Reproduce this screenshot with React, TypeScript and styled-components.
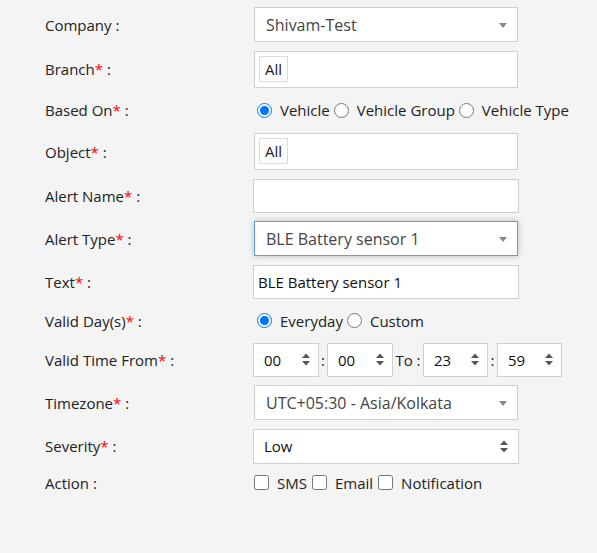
import React from 'react';
import styled, { createGlobalStyle } from 'styled-components';

const GlobalStyle = createGlobalStyle`
  html, body {
    margin: 0;
    padding: 0;
    background: #f4f4f4;
  }
  body {
    font-family: "Open Sans", "Noto Sans", Arial, sans-serif;
    color: #222;
  }
`;

const Form = styled.div`
  padding: 7px 0 40px 45px;
  display: flex;
  flex-direction: column;
  gap: 8.7px;
  min-height: 553px;
  box-sizing: border-box;
`;

const Row = styled.div<{ $h?: number }>`
  display: grid;
  grid-template-columns: 208px 1fr;
  align-items: center;
  height: ${(p) => (p.$h ? `${p.$h}px` : 'auto')};
`;

const Label = styled.div`
  font-size: 15px;
  color: #222;
  white-space: nowrap;
`;

const Req = styled.span`
  color: #f00;
`;

const SelectBox = styled.div<{ $focus?: boolean }>`
  box-sizing: border-box;
  width: 264px;
  height: 35px;
  margin-left: 1px;
  background: #fff;
  border: 1px solid ${(p) => (p.$focus ? '#5b9bf5' : '#cfcfcf')};
  box-shadow: ${(p) => (p.$focus ? '0 0 6px rgba(0,0,0,0.25)' : 'none')};
  display: flex;
  align-items: center;
  justify-content: space-between;
  padding: 0 10px 0 11px;
  font-size: 16px;
  color: #444;
`;

const Caret = styled.span`
  width: 0;
  height: 0;
  border-left: 4px solid transparent;
  border-right: 4px solid transparent;
  border-top: 5px solid #888;
  margin-top: 1px;
`;

const TagBox = styled.div`
  box-sizing: border-box;
  width: 264px;
  height: 37px;
  margin-left: 1px;
  background: #fff;
  border: 1px solid #cfcfcf;
  padding: 4px;
  display: flex;
  align-items: flex-start;
`;

const Tag = styled.span`
  box-sizing: border-box;
  height: 26px;
  padding: 0 5px;
  border: 1px solid #dcdcdc;
  background: #fff;
  font-size: 15px;
  color: #222;
  display: flex;
  align-items: center;
`;

const TextInput = styled.input`
  box-sizing: border-box;
  width: 266px;
  height: 34px;
  margin: 0;
  background: #fff;
  border: 1px solid #cfcfcf;
  outline: none;
  padding: 0 4px;
  font-family: inherit;
  font-size: 15px;
  color: #111;
`;

const Group = styled.div<{ $gap?: number }>`
  display: flex;
  align-items: center;
  gap: ${(p) => p.$gap ?? 0}px;
`;

const Option = styled.label`
  display: inline-flex;
  align-items: center;
  font-size: 15px;
  color: #222;
  gap: 8px;
`;

const Radio = styled.input.attrs({ type: 'radio' })`
  width: 15px;
  height: 15px;
  margin: 0 0 0 4px;
  accent-color: #0075ff;
`;

const Check = styled.input.attrs({ type: 'checkbox' })`
  width: 15px;
  height: 15px;
  margin: 0 0 0 1px;
`;

const SpinBox = styled.div<{ $w: number }>`
  box-sizing: border-box;
  width: ${(p) => p.$w}px;
  height: 34px;
  background: #fff;
  border: 1px solid #cfcfcf;
  display: flex;
  align-items: center;
  justify-content: space-between;
  padding: 0 8px 0 10px;
  font-size: 15px;
  color: #111;
`;

const Sep = styled.span<{ $w: number }>`
  width: ${(p) => p.$w}px;
  text-align: center;
  font-size: 15px;
  color: #222;
  white-space: nowrap;
`;

const Arrows = () => (
  <svg width="8" height="13" viewBox="0 0 8 13">
    <path d="M4 0.5 L8 5 H0 Z" fill="#555" />
    <path d="M0 8 H8 L4 12.5 Z" fill="#555" />
  </svg>
);

const Spin = ({ value, w }: { value: string; w: number }) => (
  <SpinBox $w={w}>
    <span>{value}</span>
    <Arrows />
  </SpinBox>
);

const NativeSelect = styled(SelectBox)`
  width: 266px;
  margin-left: 0;
  padding: 0 10px 0 10px;
  font-size: 15px;
  color: #111;
`;

export default function App() {
  return (
    <>
      <GlobalStyle />
      <Form>
        <Row>
          <Label>Company :</Label>
          <SelectBox>
            <span>Shivam-Test</span>
            <Caret />
          </SelectBox>
        </Row>
        <Row>
          <Label>
            Branch<Req>*</Req> :
          </Label>
          <TagBox>
            <Tag>All</Tag>
          </TagBox>
        </Row>
        <Row $h={28}>
          <Label>
            Based On<Req>*</Req> :
          </Label>
          <Group>
            <Option>
              <Radio name="based" defaultChecked />
              Vehicle
            </Option>
            <Option>
              <Radio name="based" />
              Vehicle Group
            </Option>
            <Option>
              <Radio name="based" />
              Vehicle Type
            </Option>
          </Group>
        </Row>
        <Row>
          <Label>
            Object<Req>*</Req> :
          </Label>
          <TagBox>
            <Tag>All</Tag>
          </TagBox>
        </Row>
        <Row>
          <Label>
            Alert Name<Req>*</Req> :
          </Label>
          <TextInput defaultValue="" />
        </Row>
        <Row>
          <Label>
            Alert Type<Req>*</Req> :
          </Label>
          <SelectBox $focus>
            <span>BLE Battery sensor 1</span>
            <Caret />
          </SelectBox>
        </Row>
        <Row>
          <Label>
            Text<Req>*</Req> :
          </Label>
          <TextInput defaultValue="BLE Battery sensor 1" />
        </Row>
        <Row $h={26}>
          <Label>
            Valid Day(s)<Req>*</Req> :
          </Label>
          <Group>
            <Option>
              <Radio name="days" defaultChecked />
              Everyday
            </Option>
            <Option>
              <Radio name="days" />
              Custom
            </Option>
          </Group>
        </Row>
        <Row>
          <Label>
            Valid Time From<Req>*</Req> :
          </Label>
          <Group>
            <Spin value="00" w={66} />
            <Sep $w={8}>:</Sep>
            <Spin value="00" w={66} />
            <Sep $w={30}>To :</Sep>
            <Spin value="23" w={65} />
            <Sep $w={9}>:</Sep>
            <Spin value="59" w={65} />
          </Group>
        </Row>
        <Row>
          <Label>
            Timezone<Req>*</Req> :
          </Label>
          <SelectBox>
            <span>UTC+05:30 - Asia/Kolkata</span>
            <Caret />
          </SelectBox>
        </Row>
        <Row>
          <Label>
            Severity<Req>*</Req> :
          </Label>
          <NativeSelect>
            <span>Low</span>
            <Arrows />
          </NativeSelect>
        </Row>
        <Row $h={18}>
          <Label>Action :</Label>
          <Group $gap={4}>
            <Option>
              <Check />
              SMS
            </Option>
            <Option>
              <Check />
              Email
            </Option>
            <Option>
              <Check />
              Notification
            </Option>
          </Group>
        </Row>
      </Form>
    </>
  );
}
